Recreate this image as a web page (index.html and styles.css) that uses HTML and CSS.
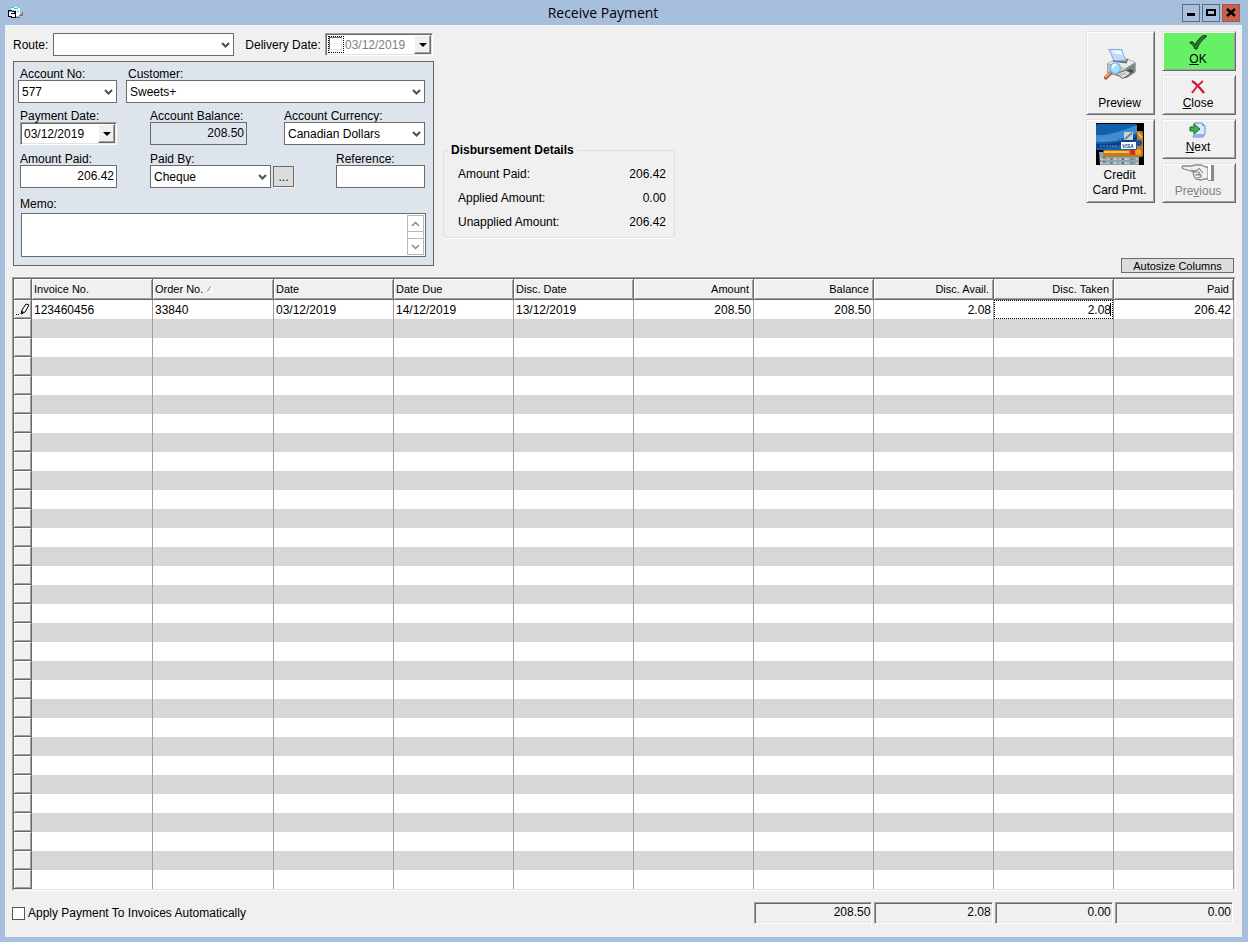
FILE: index.html
```html
<!DOCTYPE html>
<html lang="en">
<head>
<meta charset="UTF-8" />
<meta name="viewport" content="width=device-width, initial-scale=1" />
<title>Receive Payment</title>
<link rel="stylesheet" href="styles.css">
</head>
<body>

<header class="titlebar">
  <svg class="app-icon" width="16" height="12" viewBox="0 0 16 12" shape-rendering="crispEdges">
    <path d="M11 7h3V5h1v4h-4zM8 10h4v1H8z" fill="#777"/>
    <path d="M3 0h6v1h3v7l-2 1H8V3H3z" fill="#fff"/>
    <path d="M3 0h3v1H3zM6 1h4v1H6zM9 4h2v1H9z" fill="#0dd"/>
    <path d="M0 3h4v1h4v7H3v-1H0z" fill="#000"/>
    <path d="M1 5h5v4H1z" fill="#fff"/>
    <path d="M1 4h3v1H1z" fill="#0dd"/>
    <path d="M3 6h4v4H4V7H3z" fill="#000"/>
    <path d="M4 7h3v3H4z" fill="#fff"/>
  </svg>
  <h1>Receive Payment</h1>
  <div class="window-controls">
    <button type="button" aria-label="Minimize"><svg width="16" height="16"><path d="M4 8h8v3H4z"/></svg></button>
    <button type="button" aria-label="Maximize"><svg width="16" height="16"><path d="M3 4h10v7H3zM5 6v3h6V6z" fill-rule="evenodd"/></svg></button>
    <button type="button" aria-label="Close window" class="close"><svg width="16" height="16"><path d="M4 4l8 7M12 4l-8 7" stroke="#000" stroke-width="2.4"/></svg></button>
  </div>
</header>

<main class="client">
  <div class="top">
    <form class="entry">
      <div class="route-row">
        <label for="route">Route:</label>
        <span class="combo route"><select id="route"><option></option></select><svg class="chevron" width="9" height="6"><path d="M1 1l3.500 3.500L8 1"/></svg></span>
        <label for="delivery">Delivery Date:</label>
        <span class="picker delivery">
          <span class="focus-box"><input type="checkbox" aria-label="Use delivery date"></span>
          <input type="text" id="delivery" value="03/12/2019">
          <button type="button" aria-label="Pick delivery date"></button>
        </span>
      </div>

      <div class="panel">
        <div class="row-account">
          <div class="field account">
            <label for="account">Account No:</label>
            <span class="combo"><select id="account"><option>577</option></select><svg class="chevron" width="9" height="6"><path d="M1 1l3.500 3.500L8 1"/></svg></span>
          </div>
          <div class="field customer">
            <label for="customer">Customer:</label>
            <span class="combo"><select id="customer"><option>Sweets+</option></select><svg class="chevron" width="9" height="6"><path d="M1 1l3.500 3.500L8 1"/></svg></span>
          </div>
        </div>
        <div class="row-details">
          <div class="field narrow">
            <label for="payDate">Payment Date:</label>
            <span class="picker">
              <input type="text" id="payDate" value="03/12/2019">
              <button type="button" aria-label="Pick payment date"></button>
            </span>
          </div>
          <div class="field narrow">
            <label for="balance">Account Balance:</label>
            <input class="box number readonly" type="text" id="balance" value="208.50" readonly>
          </div>
          <div class="field">
            <label for="currency">Account Currency:</label>
            <span class="combo"><select id="currency"><option>Canadian Dollars</option></select><svg class="chevron" width="9" height="6"><path d="M1 1l3.500 3.500L8 1"/></svg></span>
          </div>
          <div class="field narrow">
            <label for="amount">Amount Paid:</label>
            <input class="box number" type="text" id="amount" value="206.42">
          </div>
          <div class="field paid-by">
            <label for="paidBy">Paid By:</label>
            <span class="combo"><select id="paidBy"><option>Cheque</option></select><svg class="chevron" width="9" height="6"><path d="M1 1l3.500 3.500L8 1"/></svg></span>
            <button type="button" class="more">...</button>
          </div>
          <div class="field reference">
            <label for="reference">Reference:</label>
            <input class="box" type="text" id="reference">
          </div>
        </div>
        <div class="memo">
          <label for="memo">Memo:</label>
          <div class="memo-box">
            <textarea id="memo"></textarea>
            <div class="scroller">
              <button type="button" aria-label="Scroll up"><svg width="9" height="6"><path d="M1 5l3.500 -3.500L8 5"/></svg></button>
              <button type="button" aria-label="Scroll down"><svg width="9" height="6"><path d="M1 1l3.500 3.500L8 1"/></svg></button>
            </div>
          </div>
        </div>
      </div>
    </form>

    <fieldset class="disbursement">
      <legend>Disbursement Details</legend>
      <dl>
        <dt>Amount Paid:</dt><dd>206.42</dd>
        <dt>Applied Amount:</dt><dd>0.00</dd>
        <dt>Unapplied Amount:</dt><dd>206.42</dd>
      </dl>
    </fieldset>

    <div class="side">
      <div class="actions">
        <button type="button" class="tall">
          <svg width="32" height="33" viewBox="0 0 34 34">
            <path d="M4 16L12 12h14l7 3v10l-9 6-20-5z" fill="#a9abab" stroke="#717475"/>
            <path d="M4 16l8-4h14l7 3-10 6z" fill="#e8e9e9"/>
            <path d="M9 14l2-3h15l-2 5z" fill="#6b6f71"/>
            <path d="M4 17l19 4v9L4 26z" fill="#c8caca"/>
            <path d="M23 21l10-6v10l-10 6z" fill="#84888a"/>
            <path d="M25 23l6-3v5l-6 3z" fill="#4a4e50"/>
            <path d="M29 21l2-1v2l-2 1z" fill="#4fc456"/>
            <path d="M13 27l10-4 6 3-9 6z" fill="#ddd" stroke="#555"/>
            <path d="M15 29l8-3" stroke="#999"/>
            <path d="M5 1h14c1 4 2 8 5 12H11C8 9 8 5 5 1z" fill="#bfdcff" stroke="#7fa2dc"/>
            <path d="M8 2h10l2 5-10-2z" fill="#edf6ff"/>
            <path d="M2 31l5-5" stroke="#a9603a" stroke-width="4" stroke-linecap="round"/>
            <path d="M2 30l4-4" stroke="#ff9b5c" stroke-width="2" stroke-linecap="round"/>
            <circle cx="12" cy="21" r="5.500" fill="#a4e0fb" stroke="#78b4e4" stroke-width="1.500"/>
            <path d="M9 21c0-3 2-4 4-4" stroke="#fff" stroke-width="2" fill="none"/>
          </svg>
          <span>Preview</span>
        </button>
        <button type="button" class="ok">
          <svg width="18" height="15" viewBox="0 0 18 15"><path d="M1 7l3 0 2 3C8 6 11 2 15 0h2v2C12 6 10 9 8 14H6C5 11 3 9 1 8z" fill="#24722d" stroke="#123c1a" stroke-width="1"/><path d="M3 8l4 4L15 2" stroke="#4a9550" fill="none" stroke-dasharray="1 1"/></svg>
          <span><u>O</u>K</span>
        </button>
        <button type="button">
          <svg width="14" height="14" viewBox="0 0 14 14"><path d="M1 1c5 3 8 7 12 12" stroke="#cf1432" stroke-width="2.200" fill="none"/><path d="M12 1C8 4 4 8 1 13" stroke="#dc1d3b" stroke-width="2" fill="none"/></svg>
          <span><u>C</u>lose</span>
        </button>
        <button type="button" class="tall card">
          <svg width="48" height="42" viewBox="0 0 48 42">
            <path d="M0 0h48v42H0z" fill="#000"/>
            <path d="M3 29l40 1v12H4z" fill="#8fa3af"/>
            <path d="M4 36h38M4 40h38" stroke="#d8e2e8" stroke-dasharray="5 2 2 3"/>
            <path d="M8 34v8M16 35v7M27 35v7M36 35v7" stroke="#33444f" stroke-dasharray="2 2"/>
            <path d="M9 8h36q2 0 2 2v22q0 2-2 2H9q-2 0-2-2z" fill="#c27a22"/>
            <path d="M8 29h25M42 10l4 5" stroke="#f2c052" stroke-width="2"/>
            <circle cx="43" cy="20" r="3" fill="#1c4e91"/>
            <circle cx="37" cy="29" r="3" fill="#d52b1e"/><circle cx="42" cy="29" r="3" fill="#f3a32c"/>
            <path d="M2 1h37q2 0 2 2v23q0 1-2 1H2q-2 0-2-2V3q0-2 2-2z" fill="#1260ad"/>
            <path d="M0 12C14 13 25 8 41 2v8C27 16 14 20 0 19z" fill="#3e8bce"/>
            <path d="M0 21c15 1 27-3 41-8v4C26 22 14 25 0 25z" fill="#0a3f86"/>
            <path d="M3 17h22M4 23h18" stroke="#6c9dce" stroke-dasharray="2 1"/>
            <path d="M28 9h9v8h-9z" fill="#c6d4df"/><path d="M29 16l7-6" stroke="#6d8496" stroke-width="2"/>
            <path d="M25 19h15v7H25z" fill="#fff"/>
            <text x="26" y="25" class="visa">VISA</text>
          </svg>
          <span>Credit<br>Card Pmt.</span>
        </button>
        <button type="button">
          <svg width="18" height="16" viewBox="0 0 18 16">
            <path d="M5 1h8l3 3v8l-2 3H4l2-5z" fill="#d9e8fb" stroke="#6288c4"/>
            <path d="M13 1v3h3z" fill="#7da2dc"/>
            <path d="M4 15h10l1-3H6z" fill="#8fb0e4"/>
            <path d="M1 5h4V2l6 5-6 5V9H1z" fill="#36b54a" stroke="#14702a"/>
          </svg>
          <span><u>N</u>ext</span>
        </button>
        <button type="button" disabled>
          <svg width="34" height="18" viewBox="0 0 34 18">
            <path d="M2 2h8l4-1h6l5 2h2v12h-4l-3 1-5-1-2-3-1-3 1-1-10-3q-3-1-1-3z" fill="#f0f0f0" stroke="#8a8a8a" stroke-width="1.300"/>
            <path d="M10 6l4 1 4-2M13 8l5 0 1 2-5 1M15 11l5 0 0 2-4 1M18 4l4 5" stroke="#8a8a8a" fill="none" stroke-width="1.200"/>
            <path d="M27 1h3v15h-3z" fill="#fff"/><path d="M30 1h3v16h-6v-1h3z" fill="#8a8a8a"/>
          </svg>
          <span>Pre<u>v</u>ious</span>
        </button>
      </div>
      <button type="button" class="autosize">Autosize Columns</button>
    </div>
  </div>

  <div class="grid-frame">
    <table class="invoices">
      <thead>
        <tr>
          <th class="selector"></th>
          <th class="wide">Invoice No.</th>
          <th class="wide">Order No. <svg width="8" height="7"><path d="M1 6L5 0" stroke="#909090"/><path d="M5 0l3 6H1" stroke="#fff" fill="none"/></svg></th>
          <th>Date</th>
          <th>Date Due</th>
          <th>Disc. Date</th>
          <th class="num">Amount</th>
          <th class="num">Balance</th>
          <th class="num">Disc. Avail.</th>
          <th class="num">Disc. Taken</th>
          <th class="num">Paid</th>
        </tr>
      </thead>
      <tbody id="invoiceRows">
        <tr>
          <td class="selector"><svg width="14" height="13" viewBox="0 0 14 13"><path d="M5 11l1-4 4-6 3 1-4 7z" fill="#fff" stroke="#000"/><path d="M5 11l1-3 2 1z"/><path d="M0 11h1v1H0zM2 11h1v1H2z"/></svg></td>
          <td>123460456</td>
          <td>33840</td>
          <td>03/12/2019</td>
          <td>14/12/2019</td>
          <td>13/12/2019</td>
          <td class="num">208.50</td>
          <td class="num">208.50</td>
          <td class="num">2.08</td>
          <td class="editing"><input type="text" value="2.08" aria-label="Disc. Taken"></td>
          <td class="num">206.42</td>
        </tr>
      </tbody>
    </table>
  </div>

  <footer class="totals">
    <label class="auto"><input type="checkbox"> Apply Payment To Invoices Automatically</label>
    <output>208.50</output>
    <output>2.08</output>
    <output>0.00</output>
    <output>0.00</output>
  </footer>
</main>

<script>
// Pad the grid with empty rows
const EMPTY_ROWS = 30;
const COLUMNS = 10;

function addEmptyRow() {
  const tr = document.createElement("tr");
  tr.innerHTML = `<td class="selector"></td>` + "<td></td>".repeat(COLUMNS);
  document.getElementById("invoiceRows").appendChild(tr);
}

for (let i = 0; i < EMPTY_ROWS; i++) addEmptyRow();
</script>

</body>
</html>
```
FILE: styles.css
```css
* {
  box-sizing: border-box;
}

body {
  margin: 0;
  padding: 0 6px 5px 5px;
  background: #a6bfdc;
  font-family: "Liberation Sans", Arial, sans-serif;
  font-size: 12px;
  line-height: 14px;
  color: #000;
}

button, input, select, textarea {
  font: inherit;
  color: inherit;
  margin: 0;
  border-radius: 0;
}

/* Title bar */
.titlebar {
  display: flex;
  align-items: center;
  height: 25px;
  padding: 0 2px 0 3px;
}

.titlebar h1 {
  flex: 1;
  margin: 0;
  text-align: center;
  font: 14px/20px "Open Sans", sans-serif;
}

.window-controls {
  display: flex;
  gap: 2px;
}

.window-controls button {
  width: 18px;
  height: 18px;
  padding: 0;
  border: 1px solid #5b6b80;
  background: #a6bfdc;
}

.window-controls svg {
  display: block;
}

.window-controls .close {
  background: #cb604c;
  border-color: #a05a50;
}

.client {
  background: #f0f0f0;
  padding: 6px 6px 13px 7px;
}

.top {
  display: flex;
  margin-bottom: 4px;
}

.entry {
  width: 422px;
  padding: 2px 0 7px 1px;
}

.route-row {
  display: flex;
  align-items: center;
  margin-bottom: 5px;
  padding-right: 1px;
}

.route {
  width: 181px;
  margin: 0 11px 0 5px;
}

.delivery {
  width: 108px;
  margin-left: auto;
  color: #808080;
}

/* Combos and text boxes */
.combo {
  position: relative;
  display: block;
}

.combo select {
  display: block;
  width: 100%;
  height: 23px;
  padding: 0 18px 0 3px;
  border: 1px solid #6b6b6b;
  background: #fff;
  appearance: none;
}

.chevron {
  position: absolute;
  right: 4px;
  top: 9px;
  pointer-events: none;
}

.chevron path {
  fill: none;
  stroke: #505050;
  stroke-width: 2;
}

.box {
  display: block;
  width: 100%;
  height: 23px;
  padding: 0 2px 2px;
  border: 1px solid #6b6b6b;
  background: #fff;
}

.number {
  text-align: right;
}

.readonly {
  background: #dde4eb;
}

.picker {
  display: flex;
  height: 23px;
  border: 1px solid;
  border-color: #a0a0a0 #fff #fff #a0a0a0;
  background: #fff;
  box-shadow: inset 1px 1px #696969, inset -1px -1px #e3e3e3;
  padding: 1px;
}

.picker input[type="text"] {
  flex: 1;
  min-width: 0;
  padding: 0 2px;
  border: 0;
  background: none;
}

.picker button {
  width: 17px;
  padding: 0;
  border: 1px solid;
  border-color: #fff #696969 #696969 #fff;
  box-shadow: inset -1px -1px #a0a0a0;
  background: #f0f0f0;
}

.picker button::before {
  content: "";
  display: block;
  width: 0;
  margin: 0 auto;
  border: 4px solid transparent;
  border-top-color: #000;
  border-bottom: 0;
}

.focus-box {
  width: 16px;
  margin: 1px 0 1px 1px;
  border: 1px dotted #000;
}

.picker .focus-box + input {
  padding: 0 1px;
}

.focus-box input,
.auto input {
  display: block;
  appearance: none;
  width: 13px;
  height: 13px;
  background: #fff;
  border: 1px solid #555;
}

.focus-box input {
  border-color: #696969 #e3e3e3 #e3e3e3 #696969;
}

/* Payment panel */
.panel {
  padding: 4px 8px 8px 4px;
  border: 1px solid #646464;
  background: #dde4eb;
}

.row-account {
  display: flex;
  gap: 9px;
}

.account {
  width: 99px;
}

.customer {
  flex: 1;
}

.field label,
.memo label {
  display: block;
  height: 14px;
  line-height: 16px;
}

.row-account label {
  padding-left: 2px;
}

.row-details {
  display: grid;
  grid-template-columns: 130px 134px 1fr;
  row-gap: 6px;
  margin: 5px 0 0 2px;
}

.narrow {
  width: 97px;
}

.reference {
  width: 89px;
  margin-left: auto;
}

.paid-by {
  display: grid;
  grid-template-columns: 121px 21px;
  column-gap: 2px;
  align-content: start;
}

.paid-by label {
  grid-column: 1 / 3;
}

.more {
  height: 21px;
  margin-top: 1px;
  padding: 0;
  border: 1px solid #6b6b6b;
  background: #dcdcdc;
  box-shadow: 1px 1px #f0f0f0;
}

.memo {
  margin: 8px 0 0 2px;
}

.memo-box {
  display: flex;
  height: 44px;
  margin: 3px -1px 0 1px;
  padding: 1px;
  border: 1px solid #6b6b6b;
  background: #fff;
}

.memo-box textarea {
  flex: 1;
  border: 0;
  padding: 2px;
  resize: none;
  background: none;
}

.scroller {
  display: flex;
  flex-direction: column;
  justify-content: space-between;
  width: 17px;
  border: 1px solid #b8b8b8;
}

.scroller button {
  display: flex;
  align-items: center;
  justify-content: center;
  height: 16px;
  padding: 0;
  border: 0;
  border-bottom: 1px solid #b8b8b8;
  background: #fff;
}

.scroller button:last-child {
  border-bottom: 0;
  border-top: 1px solid #b8b8b8;
}

.scroller path {
  fill: none;
  stroke: #888;
  stroke-width: 1.5;
}

/* Disbursement details */
.disbursement {
  align-self: flex-start;
  width: 232px;
  margin: 112px 0 0 9px;
  padding: 5px 8px 3px 14px;
  border: 1px solid #d5dfe8;
  border-radius: 3px;
  box-shadow: 0 1px #fff;
}

.disbursement legend {
  margin-left: -10px;
  padding: 0 3px;
  font-weight: bold;
}

.disbursement dl {
  display: grid;
  grid-template-columns: 1fr auto;
  margin: 0;
  line-height: 24px;
}

.disbursement dd {
  margin: 0;
  text-align: right;
}

/* Action buttons */
.side {
  display: flex;
  flex-direction: column;
  align-items: flex-end;
  justify-content: space-between;
  margin-left: auto;
}

.actions {
  display: grid;
  grid-template-columns: 69px 74px;
  grid-template-rows: repeat(4, 40px);
  grid-auto-flow: dense;
  gap: 4px 7px;
}

.actions button {
  display: flex;
  flex-direction: column;
  align-items: center;
  justify-content: flex-end;
  gap: 2px;
  grid-column: 2;
  padding: 0 2px 4px 0;
  border: 1px solid;
  border-color: #e3e3e3 #696969 #696969 #e3e3e3;
  background: #f0f0f0;
  box-shadow: inset 1px 1px #fff, inset -1px -1px #a0a0a0;
}

.actions .tall {
  grid-column: 1;
  grid-row: span 2;
  gap: 15px;
}

.actions .card {
  gap: 3px;
  line-height: 15px;
}

.actions .ok {
  background: #66f066;
}

.actions button:disabled {
  color: #808080;
}

.visa {
  font: italic bold 5px "Liberation Sans", sans-serif;
  fill: #153f8b;
}

.autosize {
  width: 113px;
  height: 15px;
  margin-right: 2px;
  padding: 0;
  border: 1px solid #6b6b6b;
  background: #dcdcdc;
  font-size: 11px;
  line-height: 15px;
}

/* Invoice grid */
.grid-frame {
  border: 1px solid;
  border-color: #a0a0a0 #fff #fff #a0a0a0;
}

.invoices {
  width: 100%;
  table-layout: fixed;
  border-spacing: 0;
  border: 1px solid;
  border-color: #696969 #e3e3e3 #e3e3e3 #696969;
}

.invoices th,
.invoices td {
  height: 19px;
  padding: 0 2px;
  border-right: 1px solid #a0a0a0;
  text-align: left;
  white-space: nowrap;
}

.invoices th {
  height: 21px;
  border-right-color: #696969;
  border-bottom: 1px solid #696969;
  background: #f0f0f0;
  box-shadow: inset 1px 1px #fff, inset -1px -1px #a0a0a0;
  font-size: 11px;
  font-weight: normal;
}

.invoices .wide {
  width: 121px;
}

.invoices .num {
  text-align: right;
}

.invoices th.num {
  padding-right: 4px;
}

.invoices tbody tr {
  background: #fff;
}

.invoices tbody tr:nth-child(even) {
  background: #d7d7d7;
}

.invoices .selector {
  width: 18px;
  padding: 0;
  border-right: 1px solid #696969;
  border-bottom: 1px solid #696969;
  background: #f0f0f0;
  box-shadow: inset 1px 1px #fff, inset -1px -1px #a0a0a0;
}

.selector svg {
  display: block;
  margin-left: 2px;
}

.invoices td.editing {
  position: relative;
  padding: 0;
}

.editing input {
  display: block;
  width: 100%;
  height: 19px;
  padding: 0 1px;
  border: 1px dotted #000;
  background: #fff;
  text-align: right;
}

/* text caret */
.editing::after {
  content: "";
  position: absolute;
  top: 3px;
  right: 2px;
  width: 1px;
  height: 13px;
  background: #000;
}

/* Totals */
.totals {
  display: grid;
  grid-template-columns: 18px repeat(10, 1fr);
  margin-top: 11px;
  padding: 0 2px;
}

.totals output {
  height: 22px;
  margin: 0 1px;
  padding: 2px 1px;
  border: 1px solid;
  border-color: #a0a0a0 #fff #fff #a0a0a0;
  box-shadow: inset 1px 1px #696969, inset -1px -1px #e3e3e3;
  text-align: right;
}

.auto {
  grid-column: 1 / 8;
  display: flex;
  align-items: center;
  gap: 3px;
  margin-left: -2px;
}
```
